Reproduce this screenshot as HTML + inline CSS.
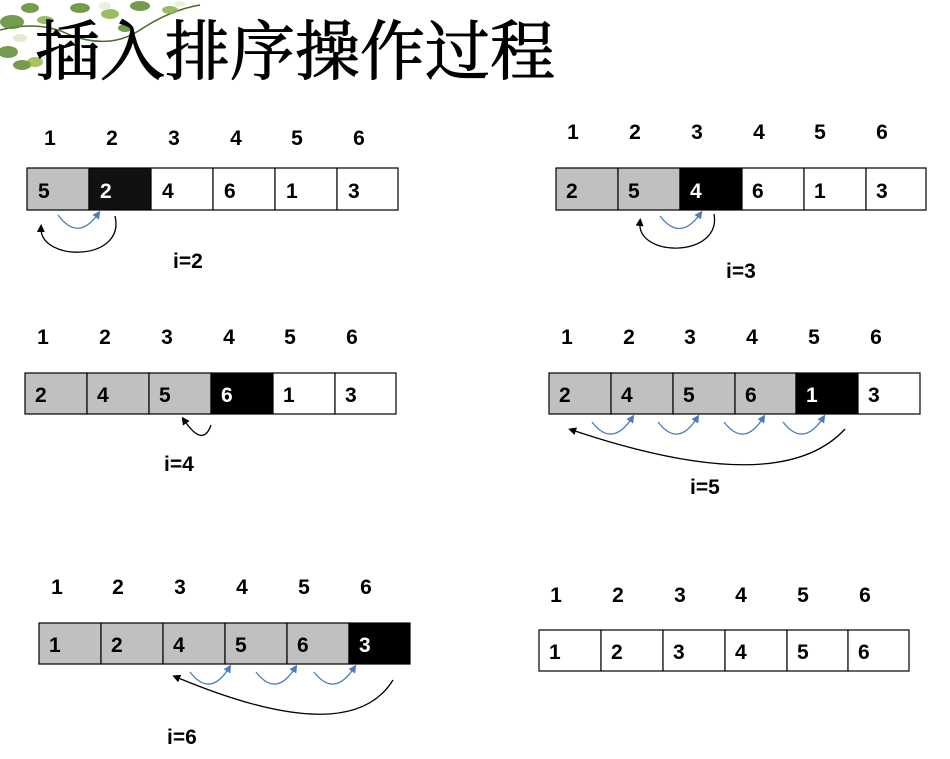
<!DOCTYPE html>
<html><head><meta charset="utf-8"><style>
html,body{margin:0;padding:0;background:#fff;width:950px;height:759px;overflow:hidden}
svg text{font-family:"Liberation Sans",sans-serif;font-weight:bold;font-size:21px}
</style></head><body>
<svg width="950" height="759" viewBox="0 0 950 759" xmlns="http://www.w3.org/2000/svg">
<defs>
<marker id="ab" markerWidth="8" markerHeight="8" refX="4" refY="4" orient="auto" markerUnits="userSpaceOnUse"><path d="M0,0 L8,4 L0,8z" fill="#4a7ebb"/></marker>
<marker id="ak" markerWidth="8" markerHeight="8" refX="4" refY="4" orient="auto" markerUnits="userSpaceOnUse"><path d="M0,0 L8,4 L0,8z" fill="#000"/></marker>
</defs>
<path d="M0,30 Q40,20 70,35 Q110,50 140,30 Q170,10 200,5" fill="none" stroke="#4a6a2a" stroke-width="1.5"/>
<g fill="#5e8a30" opacity="0.85">
<ellipse cx="12" cy="22" rx="12" ry="7"/><ellipse cx="30" cy="8" rx="9" ry="5"/><ellipse cx="8" cy="52" rx="10" ry="6"/>
<ellipse cx="45" cy="20" rx="8" ry="4" fill="#8ab04a"/><ellipse cx="80" cy="8" rx="10" ry="5"/><ellipse cx="110" cy="14" rx="9" ry="5" fill="#8ab04a"/>
<ellipse cx="140" cy="6" rx="10" ry="5"/><ellipse cx="170" cy="10" rx="8" ry="4" fill="#8ab04a"/><ellipse cx="35" cy="62" rx="8" ry="5" fill="#9ab84a"/>
<ellipse cx="20" cy="38" rx="7" ry="4" fill="#dde8c8"/><ellipse cx="105" cy="6" rx="6" ry="4" fill="#e8eed8"/><ellipse cx="180" cy="4" rx="6" ry="3" fill="#e8eed8"/>
<ellipse cx="22" cy="65" rx="9" ry="5"/><ellipse cx="125" cy="28" rx="7" ry="4"/>
</g>
<text x="35" y="74" textLength="520" stroke="#000" stroke-width="1" style="font-family:'Liberation Serif','Noto Serif CJK SC',serif;font-weight:normal;font-size:65px">插入排序操作过程</text>

<g stroke="#000" stroke-width="1.2">
<rect x="27" y="168" width="62" height="42" fill="#c0c0c0"/><rect x="89" y="168" width="62" height="42" fill="#111"/>
<rect x="151" y="168" width="62" height="42" fill="#fff"/><rect x="213" y="168" width="62" height="42" fill="#fff"/><rect x="275" y="168" width="62" height="42" fill="#fff"/><rect x="337" y="168" width="61" height="42" fill="#fff"/>
<rect x="556" y="168" width="62" height="42" fill="#c0c0c0"/><rect x="618" y="168" width="62" height="42" fill="#c0c0c0"/><rect x="680" y="168" width="62" height="42" fill="#000"/>
<rect x="742" y="168" width="62" height="42" fill="#fff"/><rect x="804" y="168" width="62" height="42" fill="#fff"/><rect x="866" y="168" width="60" height="42" fill="#fff"/>
<rect x="25" y="373" width="62" height="41" fill="#c0c0c0"/><rect x="87" y="373" width="62" height="41" fill="#c0c0c0"/><rect x="149" y="373" width="62" height="41" fill="#c0c0c0"/>
<rect x="211" y="373" width="62" height="41" fill="#000"/><rect x="273" y="373" width="62" height="41" fill="#fff"/><rect x="335" y="373" width="61" height="41" fill="#fff"/>
<rect x="549" y="373" width="62" height="41" fill="#c0c0c0"/><rect x="611" y="373" width="62" height="41" fill="#c0c0c0"/><rect x="673" y="373" width="62" height="41" fill="#c0c0c0"/>
<rect x="735" y="373" width="61" height="41" fill="#c0c0c0"/><rect x="796" y="373" width="62" height="41" fill="#000"/><rect x="858" y="373" width="62" height="41" fill="#fff"/>
<rect x="39" y="623" width="62" height="41" fill="#c0c0c0"/><rect x="101" y="623" width="62" height="41" fill="#c0c0c0"/><rect x="163" y="623" width="62" height="41" fill="#c0c0c0"/>
<rect x="225" y="623" width="62" height="41" fill="#c0c0c0"/><rect x="287" y="623" width="62" height="41" fill="#c0c0c0"/><rect x="349" y="623" width="61" height="41" fill="#000"/>
<rect x="539" y="630" width="62" height="41" fill="#fff"/><rect x="601" y="630" width="62" height="41" fill="#fff"/><rect x="663" y="630" width="62" height="41" fill="#fff"/>
<rect x="725" y="630" width="62" height="41" fill="#fff"/><rect x="787" y="630" width="61" height="41" fill="#fff"/><rect x="848" y="630" width="61" height="41" fill="#fff"/>
</g>

<g text-anchor="middle">
<text x="50" y="145">1</text><text x="112" y="145">2</text><text x="174" y="145">3</text><text x="236" y="145">4</text><text x="297" y="145">5</text><text x="359" y="145">6</text>
<text x="573" y="139">1</text><text x="635" y="139">2</text><text x="697" y="139">3</text><text x="759" y="139">4</text><text x="820" y="139">5</text><text x="882" y="139">6</text>
<text x="43" y="344">1</text><text x="105" y="344">2</text><text x="167" y="344">3</text><text x="229" y="344">4</text><text x="290" y="344">5</text><text x="352" y="344">6</text>
<text x="567" y="344">1</text><text x="629" y="344">2</text><text x="690" y="344">3</text><text x="752" y="344">4</text><text x="814" y="344">5</text><text x="876" y="344">6</text>
<text x="57" y="594">1</text><text x="118" y="594">2</text><text x="180" y="594">3</text><text x="242" y="594">4</text><text x="304" y="594">5</text><text x="366" y="594">6</text>
<text x="556" y="602">1</text><text x="618" y="602">2</text><text x="680" y="602">3</text><text x="741" y="602">4</text><text x="803" y="602">5</text><text x="865" y="602">6</text>
</g>

<g>
<text x="38" y="198">5</text><text x="100" y="198" fill="#fff">2</text><text x="162" y="198">4</text><text x="224" y="198">6</text><text x="286" y="198">1</text><text x="348" y="198">3</text>
<text x="566" y="198">2</text><text x="628" y="198">5</text><text x="690" y="198" fill="#fff">4</text><text x="752" y="198">6</text><text x="814" y="198">1</text><text x="876" y="198">3</text>
<text x="35" y="402">2</text><text x="97" y="402">4</text><text x="159" y="402">5</text><text x="221" y="402" fill="#fff">6</text><text x="283" y="402">1</text><text x="345" y="402">3</text>
<text x="559" y="402">2</text><text x="621" y="402">4</text><text x="683" y="402">5</text><text x="745" y="402">6</text><text x="806" y="402" fill="#fff">1</text><text x="868" y="402">3</text>
<text x="49" y="652">1</text><text x="111" y="652">2</text><text x="173" y="652">4</text><text x="235" y="652">5</text><text x="297" y="652">6</text><text x="359" y="652" fill="#fff">3</text>
<text x="549" y="659">1</text><text x="611" y="659">2</text><text x="673" y="659">3</text><text x="735" y="659">4</text><text x="797" y="659">5</text><text x="858" y="659">6</text>
<text x="173" y="268">i=2</text><text x="726" y="278">i=3</text><text x="164" y="471">i=4</text><text x="690" y="494">i=5</text><text x="167" y="744">i=6</text>
</g>

<g fill="none" stroke-width="1.3">
<path d="M58,215 Q78,242 98,214" stroke="#4a7ebb" marker-end="url(#ab)"/>
<path d="M115,216 C126,262 40,262 41,228" stroke="#000" marker-end="url(#ak)"/>
<path d="M660,216 Q680,242 700,214" stroke="#4a7ebb" marker-end="url(#ab)"/>
<path d="M714,214 C722,258 636,258 640,222" stroke="#000" marker-end="url(#ak)"/>
<path d="M211,425 Q203,448 184,420" stroke="#000" marker-end="url(#ak)"/>
<path d="M592,422 Q612,448 632,418" stroke="#4a7ebb" marker-end="url(#ab)"/>
<path d="M658,422 Q678,448 697,418" stroke="#4a7ebb" marker-end="url(#ab)"/>
<path d="M724,422 Q744,448 763,418" stroke="#4a7ebb" marker-end="url(#ab)"/>
<path d="M783,422 Q803,448 823,418" stroke="#4a7ebb" marker-end="url(#ab)"/>
<path d="M845,429 Q780,500 572,430" stroke="#000" marker-end="url(#ak)"/>
<path d="M190,672 Q210,698 229,668" stroke="#4a7ebb" marker-end="url(#ab)"/>
<path d="M256,672 Q276,698 295,668" stroke="#4a7ebb" marker-end="url(#ab)"/>
<path d="M314,672 Q334,698 354,668" stroke="#4a7ebb" marker-end="url(#ab)"/>
<path d="M393,680 Q350,750 176,677" stroke="#000" marker-end="url(#ak)"/>
</g>
</svg>
</body></html>
